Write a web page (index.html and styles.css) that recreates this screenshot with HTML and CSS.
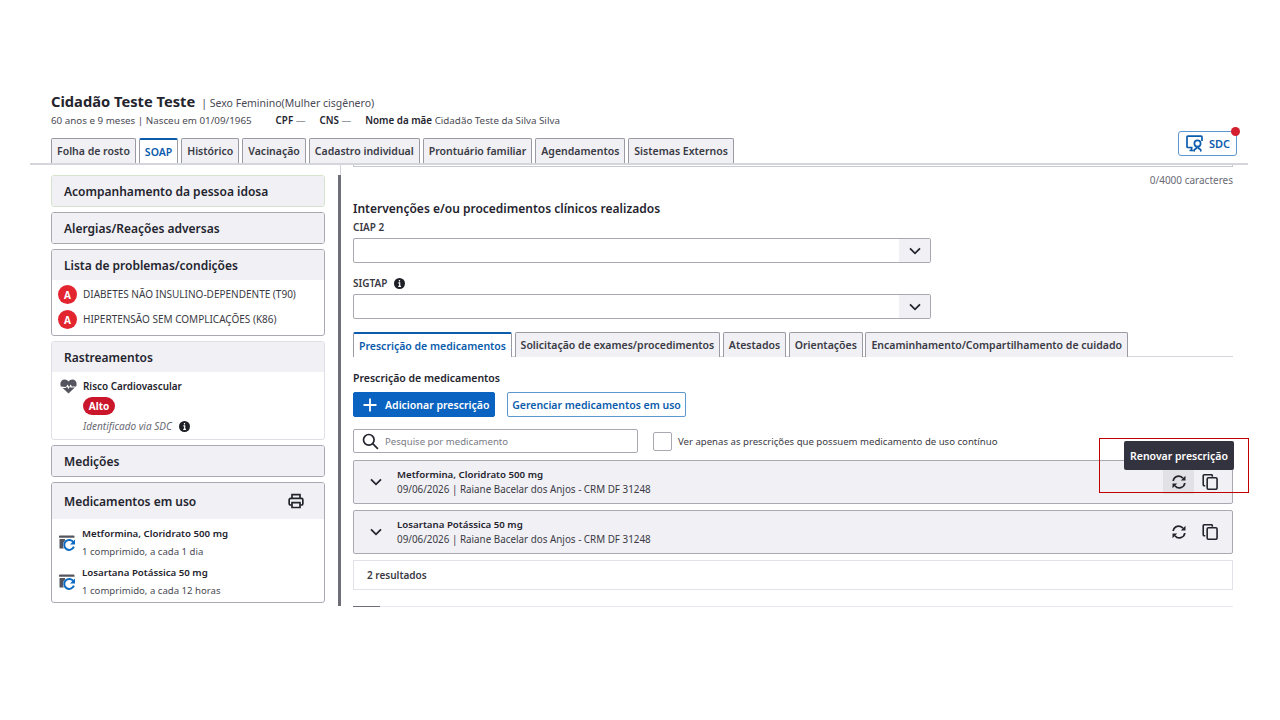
FILE: index.html
```html
<!DOCTYPE html>
<html lang="en">
<head>
  <meta charset="UTF-8">
  <title>Prescrição de medicamentos</title>
  <link rel="stylesheet" href="styles.css">
</head>
<body>

<div class="page">

  <!-- Patient header -->
  <header class="patient">
    <div class="patient-name">
      <h1>Cidadão Teste Teste</h1>
      <span>| Sexo Feminino(Mulher cisgênero)</span>
    </div>
    <div class="patient-meta">
      <span class="age">60 anos e 9 meses | Nasceu em 01/09/1965</span>
      <span><b>CPF</b> —</span>
      <span><b>CNS</b> —</span>
      <span><b>Nome da mãe</b> Cidadão Teste da Silva Silva</span>
    </div>
    <div class="main-tabs">
      <a class="tab">Folha de rosto</a>
      <a class="tab active">SOAP</a>
      <a class="tab">Histórico</a>
      <a class="tab">Vacinação</a>
      <a class="tab">Cadastro individual</a>
      <a class="tab">Prontuário familiar</a>
      <a class="tab">Agendamentos</a>
      <a class="tab">Sistemas Externos</a>
      <button class="sdc">
        <svg width="18" height="18" viewBox="0 0 18 18" fill="none" stroke="#0b5cad" stroke-width="1.700">
          <path d="M6.500 12.500H1.800a.8.8 0 0 1-.8-.8V2a.8.8 0 0 1 .8-.8h13.400a.8.8 0 0 1 .8.8v4"/>
          <path d="M3.500 15.500h4M5.500 12.500v3"/>
          <circle cx="11.500" cy="8.500" r="3.100"/>
          <path d="M10.500 11.500v1.800l-2 1.200-.5 2M12.500 11.500v1.800l2 1.200.5 2"/>
        </svg>
        SDC
        <span class="sdc-dot"></span>
      </button>
    </div>
  </header>

  <div class="columns">

    <!-- Left column -->
    <aside class="sidebar">
      <div class="card card-green"><h3>Acompanhamento da pessoa idosa</h3></div>
      <div class="card"><h3>Alergias/Reações adversas</h3></div>

      <div class="card">
        <h3>Lista de problemas/condições</h3>
        <div class="card-body problems">
          <div class="problem"><span class="badge">A</span>DIABETES NÃO INSULINO-DEPENDENTE (T90)</div>
          <div class="problem"><span class="badge">A</span>HIPERTENSÃO SEM COMPLICAÇÕES (K86)</div>
        </div>
      </div>

      <div class="card card-flat">
        <h3>Rastreamentos</h3>
        <div class="card-body screening">
          <svg class="heart" width="17" height="15" viewBox="0 0 17 15">
            <path fill="#55555f" d="M8.500 14.500 2.700 9h3.200l1-1.600 1.600 2.600 1.500-2.400.6.800h4.200zM.9 7.500C-.7 3.800 1.500.5 4.600.5c1.600 0 3 .8 3.900 2.100C9.400 1.300 10.800.5 12.400.5c3.100 0 5.300 3.300 3.700 7h-4.200l-1.300-1.900-1.500 2.400-1.600-2.600-1.600 2.600z"/>
          </svg>
          <div>
            <div class="screening-name">Risco Cardiovascular</div>
            <span class="pill">Alto</span>
            <div class="screening-note">Identificado via SDC
              <svg class="info" width="11" height="11" viewBox="0 0 12 12"><circle cx="6" cy="6" r="6" fill="#1f1f28"/><path d="M6 2.300v1.500M4.700 5.400H6.200V9M4.600 9.200h3" stroke="#fff" stroke-width="1.300" fill="none"/></svg>
            </div>
          </div>
        </div>
      </div>

      <div class="card"><h3>Medições</h3></div>

      <div class="card">
        <h3 class="head-tall">Medicamentos em uso
          <svg width="16" height="16" viewBox="0 0 18 18" fill="none" stroke="#24242e" stroke-width="1.900">
            <path d="M4.500 6V1.800h9V6M4.500 13.500H2.800A1.500 1.500 0 0 1 1.300 12V7.500A1.500 1.500 0 0 1 2.800 6h12.400a1.500 1.500 0 0 1 1.500 1.500V12a1.500 1.500 0 0 1-1.500 1.500h-1.700"/>
            <path d="M4.500 10.800h9v5.500h-9z"/>
          </svg>
        </h3>
        <div class="card-body meds">
          <div class="med">
            <svg width="18" height="18" viewBox="0 0 18 18">
              <path fill="#55555f" d="M1 2.500a1 1 0 0 1 1-1h13.500a1 1 0 0 1 1 1v1.200H1zM1.500 5h5.500v1.500a6 6 0 0 0-2 4.500 6 6 0 0 0 .8 3.500H1.500z"/>
              <path fill="none" stroke="#0b6bc4" stroke-width="2" d="M15.500 8.300a5 5 0 1 0 .4 4.400"/>
              <path fill="#0b6bc4" d="M17 5.500v5h-5z"/>
            </svg>
            <div>
              <div class="med-name">Metformina, Cloridrato 500 mg</div>
              <div class="med-dose">1 comprimido, a cada 1 dia</div>
            </div>
          </div>
          <div class="med">
            <svg width="18" height="18" viewBox="0 0 18 18">
              <path fill="#55555f" d="M1 2.500a1 1 0 0 1 1-1h13.500a1 1 0 0 1 1 1v1.200H1zM1.500 5h5.500v1.500a6 6 0 0 0-2 4.500 6 6 0 0 0 .8 3.500H1.500z"/>
              <path fill="none" stroke="#0b6bc4" stroke-width="2" d="M15.500 8.300a5 5 0 1 0 .4 4.400"/>
              <path fill="#0b6bc4" d="M17 5.500v5h-5z"/>
            </svg>
            <div>
              <div class="med-name">Losartana Potássica 50 mg</div>
              <div class="med-dose">1 comprimido, a cada 12 horas</div>
            </div>
          </div>
        </div>
      </div>
    </aside>

    <!-- Right column -->
    <main class="content">
      <div class="textarea-end"></div>
      <div class="counter">0/4000 caracteres</div>

      <h2>Intervenções e/ou procedimentos clínicos realizados</h2>
      <label class="field-label">CIAP 2</label>
      <div class="select">
        <span class="select-btn"><svg width="12" height="8" viewBox="0 0 12 8" fill="none" stroke="#24242e" stroke-width="1.800"><path d="M1 1.300l5 5 5-5"/></svg></span>
      </div>
      <label class="field-label sigtap">SIGTAP
        <svg width="11" height="11" viewBox="0 0 12 12"><circle cx="6" cy="6" r="6" fill="#1f1f28"/><path d="M6 2.300v1.500M4.700 5.400H6.200V9M4.600 9.200h3" stroke="#fff" stroke-width="1.300" fill="none"/></svg>
      </label>
      <div class="select">
        <span class="select-btn"><svg width="12" height="8" viewBox="0 0 12 8" fill="none" stroke="#24242e" stroke-width="1.800"><path d="M1 1.300l5 5 5-5"/></svg></span>
      </div>

      <div class="sub-tabs">
        <a class="tab active">Prescrição de medicamentos</a>
        <a class="tab">Solicitação de exames/procedimentos</a>
        <a class="tab">Atestados</a>
        <a class="tab">Orientações</a>
        <a class="tab">Encaminhamento/Compartilhamento de cuidado</a>
      </div>

      <div class="section-title">Prescrição de medicamentos</div>
      <div class="actions">
        <button class="btn-primary">
          <svg width="16" height="16" viewBox="0 0 16 16" stroke="#fff" stroke-width="1.800"><path d="M8 1.500v13M1.500 8h13"/></svg>
          Adicionar prescrição
        </button>
        <button class="btn-outline">Gerenciar medicamentos em uso</button>
      </div>

      <div class="filters">
        <div class="search">
          <svg width="17" height="17" viewBox="0 0 17 17" fill="none" stroke="#24242e" stroke-width="1.700"><circle cx="6.800" cy="6.800" r="5.300"/><path d="M10.700 10.700l5.200 5.200"/></svg>
          <span>Pesquise por medicamento</span>
        </div>
        <span class="checkbox"></span>
        <span class="check-label">Ver apenas as prescrições que possuem medicamento de uso contínuo</span>
      </div>

      <div class="rx-row">
        <svg class="rx-chevron" width="12" height="8" viewBox="0 0 12 8" fill="none" stroke="#24242e" stroke-width="1.800"><path d="M1 1.300l5 5 5-5"/></svg>
        <div class="rx-text">
          <div class="rx-name">Metformina, Cloridrato 500 mg</div>
          <div class="rx-meta">09/06/2026 | Raiane Bacelar dos Anjos - CRM DF 31248</div>
        </div>
        <span class="icon-btn hovered">
          <svg width="14" height="14" viewBox="0 0 14 14" fill="none" stroke="#24242e" stroke-width="1.700"><path d="M1.200 6A5.500 5.500 0 0 1 11 3.300M12.800 8A5.500 5.500 0 0 1 3 10.700"/><path fill="#24242e" stroke="none" d="M13.500.8v4.700H8.800zM.5 13.200V8.500h4.700z"/></svg>
        </span>
        <span class="icon-btn">
          <svg width="16" height="16" viewBox="0 0 17 17" fill="none" stroke="#24242e" stroke-width="1.700"><path d="M3.500 12.500h-1a1.200 1.200 0 0 1-1.200-1.200V2a1.200 1.200 0 0 1 1.200-1.200h7.300A1.200 1.200 0 0 1 11 2v1"/><rect x="5.500" y="4" width="10.500" height="12.200" rx="1.300"/></svg>
        </span>
      </div>

      <div class="rx-row">
        <svg class="rx-chevron" width="12" height="8" viewBox="0 0 12 8" fill="none" stroke="#24242e" stroke-width="1.800"><path d="M1 1.300l5 5 5-5"/></svg>
        <div class="rx-text">
          <div class="rx-name">Losartana Potássica 50 mg</div>
          <div class="rx-meta">09/06/2026 | Raiane Bacelar dos Anjos - CRM DF 31248</div>
        </div>
        <span class="icon-btn">
          <svg width="14" height="14" viewBox="0 0 14 14" fill="none" stroke="#24242e" stroke-width="1.700"><path d="M1.200 6A5.500 5.500 0 0 1 11 3.300M12.800 8A5.500 5.500 0 0 1 3 10.700"/><path fill="#24242e" stroke="none" d="M13.500.8v4.700H8.800zM.5 13.200V8.500h4.700z"/></svg>
        </span>
        <span class="icon-btn">
          <svg width="16" height="16" viewBox="0 0 17 17" fill="none" stroke="#24242e" stroke-width="1.700"><path d="M3.500 12.500h-1a1.200 1.200 0 0 1-1.200-1.200V2a1.200 1.200 0 0 1 1.200-1.200h7.300A1.200 1.200 0 0 1 11 2v1"/><rect x="5.500" y="4" width="10.500" height="12.200" rx="1.300"/></svg>
        </span>
      </div>

      <div class="results">2 resultados</div>
      <div class="next-line"><span></span></div>
    </main>
  </div>

  <!-- Annotation over the first row -->
  <div class="tooltip">Renovar prescrição</div>
  <div class="highlight"></div>
</div>

</body>
</html>
```

FILE: styles.css
```css
* {
  box-sizing: border-box;
}

body {
  margin: 0;
  background: #fff;
  color: #24242e;
  font-family: "Noto Sans", Roboto, sans-serif;
  font-size: 11px;
}

.page {
  position: relative;
  width: 1280px;
  height: 720px;
  padding-top: 91px;
  overflow: hidden;
}

h1, h2, h3 {
  margin: 0;
}

/* Patient header */
.patient {
  width: 1218px;
  margin-left: 30px;
  padding-left: 21px;
  border-bottom: 2px solid #d5d5dc;
}

.patient-name {
  display: flex;
  align-items: baseline;
  gap: 6px;
  height: 20px;
}

.patient-name h1 {
  font-size: 14.700px;
  font-weight: 700;
}

.patient-name span {
  font-size: 10.500px;
  color: #4a4a54;
}

.patient-meta {
  display: flex;
  align-items: center;
  gap: 14px;
  height: 18px;
  font-size: 9.800px;
  color: #4a4a54;
}

.patient-meta .age {
  margin-right: 10px;
}

.patient-meta b {
  color: #24242e;
  font-weight: 600;
}

.main-tabs {
  display: flex;
  align-items: flex-end;
  gap: 3px;
  height: 26px;
  margin-top: 8px;
  position: relative;
}

.tab {
  display: flex;
  align-items: center;
  height: 25px;
  padding: 0 5px;
  background: #f0f0f5;
  border: 1px solid #9a9aa5;
  border-bottom: none;
  border-radius: 2px 2px 0 0;
  font-size: 10.500px;
  font-weight: 600;
  color: #3a3a44;
  white-space: nowrap;
}

.tab.active {
  background: #fff;
  color: #0b5cad;
  border-top: 2px solid #0b5cad;
}

.sdc {
  position: absolute;
  left: 1127px;
  top: -6px;
  display: flex;
  align-items: center;
  gap: 5px;
  width: 59px;
  height: 25px;
  padding: 0 0 0 7px;
  background: #fff;
  border: 1px solid #5d97cf;
  border-radius: 3px;
  color: #0b5cad;
  font-family: inherit;
  font-size: 11px;
  font-weight: 600;
}

.sdc-dot {
  position: absolute;
  top: -5px;
  right: -4px;
  width: 9px;
  height: 9px;
  border-radius: 50%;
  background: #d31f2f;
}

/* Columns */
.columns {
  display: flex;
  padding-left: 51px;
}

.sidebar {
  display: flex;
  flex-direction: column;
  gap: 5px;
  width: 274px;
  padding-top: 10px;
}

.card {
  border: 1px solid #a9a9b3;
  border-radius: 3px;
  overflow: hidden;
  background: #fff;
}

.card-flat {
  border-color: #dfdfe5;
}

.card-green {
  border-color: #d4e3cd;
}

.card-green h3 {
  background: #dff3da;
}

.card h3 {
  display: flex;
  align-items: center;
  justify-content: space-between;
  height: 30px;
  padding: 0 13px 0 12px;
  background: #f0f0f5;
  font-size: 12px;
  font-weight: 600;
}

.card h3.head-tall {
  height: 36px;
  padding-right: 20px;
}

.problems {
  padding: 1px 6px 4px;
}

.problem {
  display: flex;
  align-items: center;
  gap: 6px;
  height: 25px;
  font-size: 10px;
  color: #3a3a44;
}

.badge {
  display: flex;
  align-items: center;
  justify-content: center;
  width: 19px;
  height: 19px;
  margin-top: 2px;
  border-radius: 50%;
  background: #e2252f;
  color: #fff;
  font-size: 10px;
  font-weight: 700;
}

.screening {
  display: flex;
  gap: 6px;
  padding: 7px 8px 6px;
}

.screening-name {
  height: 14px;
  line-height: 14px;
  font-size: 9.900px;
  font-weight: 600;
}

.pill {
  display: block;
  width: 32px;
  height: 18px;
  margin-top: 4px;
  line-height: 18px;
  text-align: center;
  border-radius: 9px;
  background: #c9162b;
  color: #fff;
  font-size: 10px;
  font-weight: 700;
}

.screening-note {
  display: flex;
  align-items: center;
  gap: 7px;
  height: 14px;
  margin-top: 4px;
  font-size: 10px;
  font-style: italic;
  color: #6a6a74;
}

.meds {
  display: flex;
  flex-direction: column;
  gap: 3px;
  padding: 6px 6px 2px;
}

.med {
  display: flex;
  align-items: center;
  gap: 6px;
}

.med-name {
  height: 18px;
  line-height: 18px;
  font-size: 9.700px;
  font-weight: 600;
}

.med-dose {
  height: 18px;
  line-height: 18px;
  font-size: 9.600px;
  color: #4a4a54;
}

.content {
  position: relative;
  width: 895px;
  height: 431px;
  margin-left: 13px;
  margin-top: 10px;
  padding-left: 12px;
  border-left: 3px solid #6e6e78;
}

.content::before {
  content: "";
  position: absolute;
  left: -1px;
  top: -10px;
  width: 1px;
  height: 10px;
  background: #d5d5dc;
}

.textarea-end {
  height: 2px;
  margin-top: -10px;
  border: 1px solid #c9c9d2;
  border-top: none;
  width: 880px;
}

.counter {
  width: 880px;
  margin-top: 6px;
  text-align: right;
  font-size: 10px;
  color: #6a6a74;
}

.content h2 {
  margin-top: 14px;
  font-size: 12px;
  font-weight: 600;
  line-height: 16px;
}

.field-label {
  display: flex;
  align-items: center;
  gap: 7px;
  height: 14px;
  margin-top: 3px;
  font-size: 10px;
  font-weight: 600;
  color: #3a3a44;
}

.field-label.sigtap {
  margin-top: 13px;
}

.select {
  display: flex;
  justify-content: flex-end;
  width: 578px;
  height: 25px;
  margin-top: 4px;
  border: 1px solid #a9a9b3;
  border-radius: 2px;
}

.select-btn {
  display: flex;
  align-items: center;
  justify-content: center;
  width: 31px;
  background: #f0f0f5;
}

.sub-tabs {
  display: flex;
  align-items: flex-end;
  gap: 2.600px;
  width: 880px;
  height: 26px;
  margin-top: 12px;
  border-bottom: 1px solid #d5d5dc;
}

.sub-tabs .tab {
  height: 25px;
  margin-bottom: -1px;
}

.section-title {
  margin-top: 14px;
  font-size: 10.500px;
  font-weight: 600;
  line-height: 14px;
}

.actions {
  display: flex;
  gap: 12px;
  margin-top: 7px;
}

.btn-primary,
.btn-outline {
  display: flex;
  align-items: center;
  height: 25px;
  border-radius: 2px;
  font-family: inherit;
  font-size: 10.500px;
  font-weight: 600;
}

.btn-primary {
  gap: 7px;
  width: 142px;
  padding: 0 0 0 8px;
  background: #0b63c1;
  border: 1px solid #0b63c1;
  color: #fff;
}

.btn-outline {
  width: 179px;
  justify-content: center;
  padding: 0;
  background: #fff;
  border: 1px solid #5d97cf;
  color: #0b5cad;
}

.filters {
  display: flex;
  align-items: center;
  margin-top: 12px;
  height: 24px;
}

.search {
  display: flex;
  align-items: center;
  gap: 6px;
  width: 285px;
  height: 24px;
  padding-left: 8px;
  border: 1px solid #a9a9b3;
  border-radius: 2px;
  font-size: 9.600px;
  color: #7a7a84;
}

.checkbox {
  width: 19px;
  height: 19px;
  margin-left: 15px;
  border: 1px solid #a9a9b3;
  border-radius: 2px;
}

.check-label {
  margin-left: 6px;
  font-size: 9.600px;
  color: #3a3a44;
}

.rx-row {
  display: flex;
  align-items: center;
  width: 880px;
  height: 44px;
  margin-top: 7px;
  padding-right: 7px;
  background: #f0f0f5;
  border: 1px solid #a9a9b3;
  border-radius: 2px;
}

.rx-row + .rx-row {
  margin-top: 6px;
}

.rx-chevron {
  margin-left: 16px;
  margin-right: 15px;
  flex-shrink: 0;
}

.rx-text {
  flex: 1;
}

.rx-name {
  font-size: 9.700px;
  font-weight: 600;
  line-height: 15px;
}

.rx-meta {
  font-size: 9.850px;
  color: #3a3a44;
  line-height: 15px;
}

.icon-btn {
  display: flex;
  align-items: center;
  justify-content: center;
  width: 31px;
  height: 24px;
}

.icon-btn.hovered {
  background: #e2e2e6;
}

.results {
  display: flex;
  align-items: center;
  width: 880px;
  height: 30px;
  margin-top: 6px;
  padding-left: 13px;
  border: 1px solid #e2e2e8;
  font-size: 10px;
  font-weight: 600;
  color: #3a3a44;
}

.next-line {
  width: 880px;
  height: 1px;
  margin-top: 16px;
  background: #e8e8ee;
}

.next-line span {
  display: block;
  width: 27px;
  height: 1px;
  background: #6e6e78;
}

/* Overlays */
.tooltip {
  position: absolute;
  left: 1124px;
  top: 441px;
  display: flex;
  align-items: center;
  justify-content: center;
  width: 110px;
  height: 29px;
  background: #33333f;
  border-radius: 2px;
  color: #fff;
  font-size: 10.500px;
  font-weight: 600;
}

.highlight {
  position: absolute;
  left: 1099px;
  top: 438px;
  width: 150px;
  height: 55px;
  border: 1px solid #c00000;
}
```
